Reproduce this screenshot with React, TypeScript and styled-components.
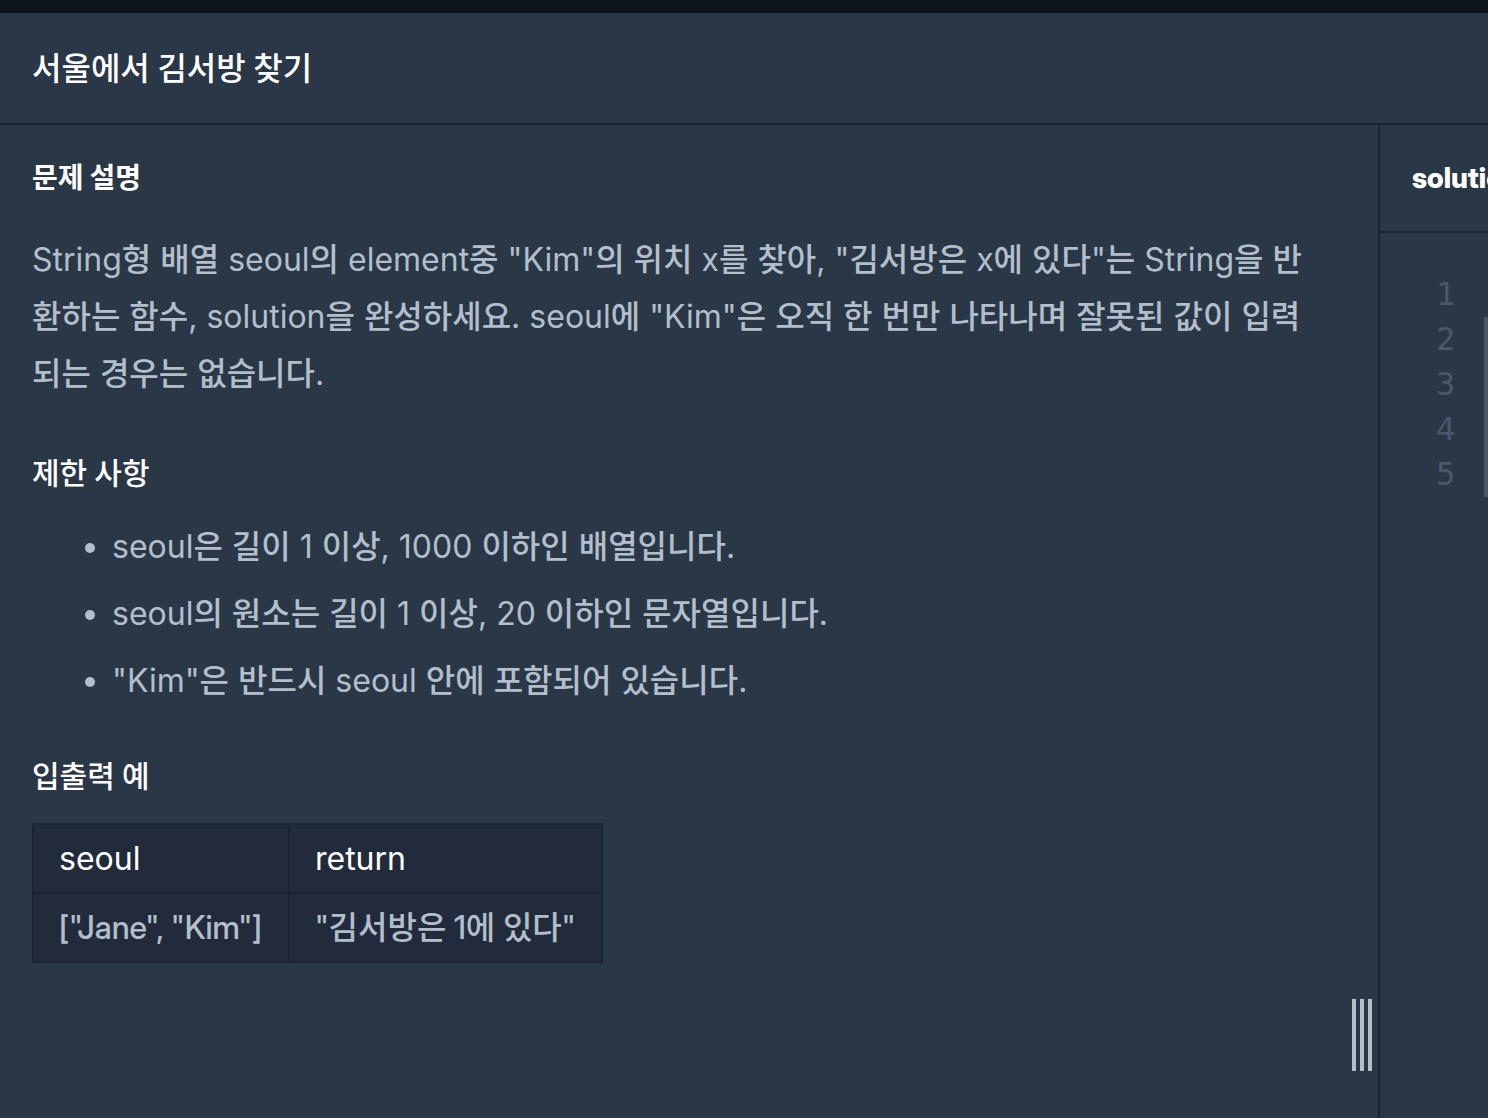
import React from "react";
import styled, { createGlobalStyle } from "styled-components";

const colors = {
  chrome: "#0e151b",
  surface: "#2a3747",
  line: "#1a2436",
  table: "#222b3c",
  text: "#b2bfcb",
  heading: "#ffffff",
  gutter: "#4a586c",
  handle: "#b4c0c8",
};

const fonts = {
  body: `Inter, "Noto Sans CJK KR Medium", "Noto Sans CJK KR", sans-serif`,
  display: `"Inter Display", Inter, "Noto Sans CJK KR", sans-serif`,
  mono: `"DejaVu Sans Mono", monospace`,
};

const GlobalStyle = createGlobalStyle`
  *, *::before, *::after { box-sizing: border-box; }
  body {
    margin: 0;
    background: ${colors.surface};
    color: ${colors.text};
    font-family: ${fonts.body};
    font-size: 32px;
    line-height: 58px;
    overflow: hidden;
  }
`;

const Page = styled.div`
  display: flex;
  flex-direction: column;
  height: 100vh;
`;

const TopBar = styled.div`
  flex: none;
  height: 13px;
  background: ${colors.chrome};
`;

const Header = styled.header`
  flex: none;
  padding: 27px 32px 25px;
  border-bottom: 2px solid ${colors.line};
`;

const Title = styled.h1`
  margin: 0;
  font-family: ${fonts.display};
  font-size: 32px;
  font-weight: 500;
  line-height: 58px;
  color: ${colors.heading};
`;

const Main = styled.main`
  flex: 1;
  display: flex;
  min-height: 0;
`;

const Guide = styled.section`
  flex: 1;
  min-width: 0;
  padding: 32px 42px 32px 32px;
`;

const Heading = styled.h2`
  margin: 0;
  font-family: ${fonts.display};
  font-size: 28px;
  font-weight: 700;
  line-height: 42px;
  color: ${colors.heading};
`;

const SubHeading = styled.h3`
  margin: 0;
  font-family: ${fonts.display};
  font-size: 30px;
  font-weight: 500;
  line-height: 46px;
  color: ${colors.heading};
`;

const Paragraph = styled.p`
  margin: 32px 0 48px;
  line-height: 57px;
`;

const List = styled.ul`
  margin: 22px 0 44px;
  padding-left: 80px;
`;

const Item = styled.li`
  line-height: 57px;

  & + & {
    margin-top: 10px;
  }
`;

const Table = styled.table`
  margin-top: 24px;
  border-collapse: collapse;
  background: ${colors.table};
  line-height: 51px;
`;

const HeadCell = styled.th`
  padding: 8px 26px 8px 25px;
  border: 2px solid ${colors.line};
  font-weight: 400;
  text-align: left;
  color: ${colors.heading};
`;

const Cell = styled.td`
  padding: 8px 26px 8px 25px;
  border: 2px solid ${colors.line};
  font-family: ${fonts.display};
  font-weight: 500;
`;

const Gutter = styled.div`
  flex: none;
  display: flex;
  flex-direction: column;
  justify-content: flex-end;
  padding: 0 6px 47px 0;
`;

const Handle = styled.button`
  display: flex;
  gap: 4px;
  height: 72px;
  padding: 0;
  border: 0;
  background: none;
  cursor: col-resize;
`;

const Grip = styled.span`
  width: 4px;
  height: 100%;
  background: ${colors.handle};
`;

const Editor = styled.section`
  flex: none;
  display: flex;
  flex-direction: column;
  width: 110px;
  border-left: 2px solid ${colors.line};
  overflow: hidden;
`;

const FileTab = styled.h2`
  margin: 0;
  padding: 32px;
  border-bottom: 2px solid ${colors.line};
  font-family: ${fonts.display};
  font-size: 28px;
  font-weight: 800;
  line-height: 42px;
  white-space: nowrap;
  color: ${colors.heading};
`;

const Code = styled.div`
  display: flex;
  justify-content: space-between;
  padding-top: 39px;
`;

const LineNumbers = styled.ol`
  margin: 0;
  padding: 0 0 0 56px;
  list-style: none;
  font-family: ${fonts.mono};
  line-height: 45px;
  color: ${colors.gutter};
`;

const IndentGuide = styled.div`
  width: 4px;
  margin-top: 45px;
  background: ${colors.gutter};
`;

const lines = [1, 2, 3, 4, 5];

const rules = [
  "seoul은 길이 1 이상, 1000 이하인 배열입니다.",
  "seoul의 원소는 길이 1 이상, 20 이하인 문자열입니다.",
  "\"Kim\"은 반드시 seoul 안에 포함되어 있습니다.",
];

export default function App() {
  return (
    <Page lang="ko">
      <GlobalStyle />
      <TopBar />
      <Header>
        <Title>서울에서 김서방 찾기</Title>
      </Header>
      <Main>
        <Guide>
          <Heading>문제 설명</Heading>
          <Paragraph>
            String형 배열 seoul의 element중 "Kim"의 위치 x를 찾아, "김서방은 x에 있다"는 String을 반환하는 함수,
            solution을 완성하세요. seoul에 "Kim"은 오직 한 번만 나타나며 잘못된 값이 입력되는 경우는 없습니다.
          </Paragraph>
          <SubHeading>제한 사항</SubHeading>
          <List>
            {rules.map((rule) => (
              <Item key={rule}>{rule}</Item>
            ))}
          </List>
          <SubHeading>입출력 예</SubHeading>
          <Table>
            <thead>
              <tr>
                <HeadCell scope="col">seoul</HeadCell>
                <HeadCell scope="col">return</HeadCell>
              </tr>
            </thead>
            <tbody>
              <tr>
                <Cell>["Jane", "Kim"]</Cell>
                <Cell>"김서방은 1에 있다"</Cell>
              </tr>
            </tbody>
          </Table>
        </Guide>
        <Gutter>
          <Handle type="button" aria-label="패널 크기 조절">
            <Grip />
            <Grip />
            <Grip />
          </Handle>
        </Gutter>
        <Editor>
          <FileTab>solution.java</FileTab>
          <Code>
            <LineNumbers>
              {lines.map((line) => (
                <li key={line}>{line}</li>
              ))}
            </LineNumbers>
            <IndentGuide />
          </Code>
        </Editor>
      </Main>
    </Page>
  );
}
